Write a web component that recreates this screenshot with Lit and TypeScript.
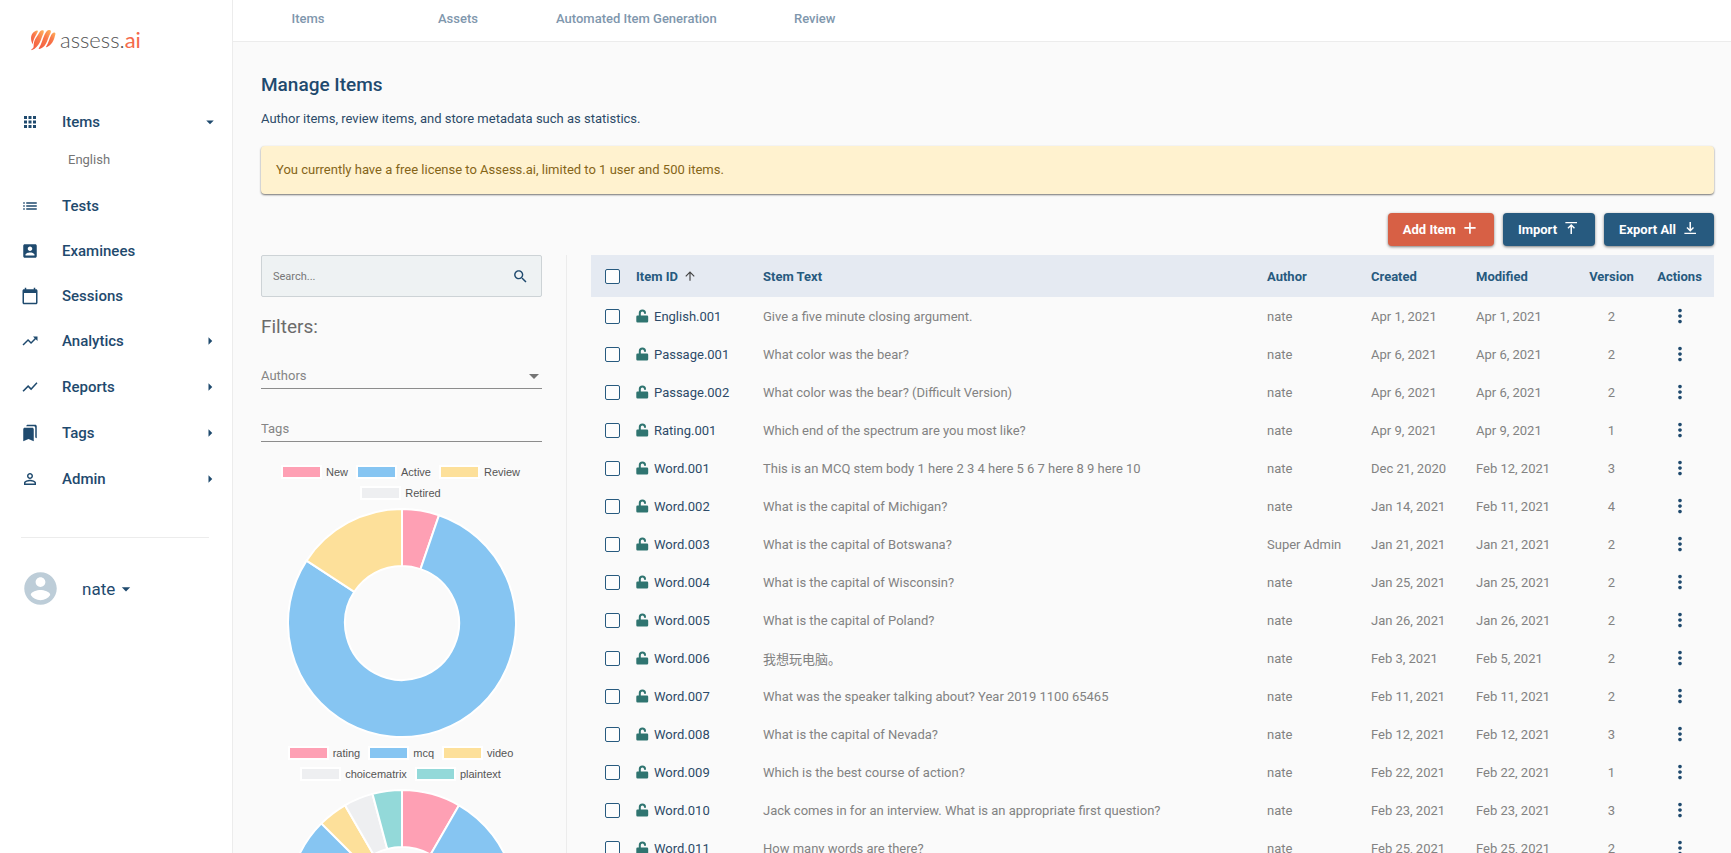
import { LitElement, html, css, svg } from "lit";
import { customElement, property } from "lit/decorators.js";

type Slice = { label: string; value: number; color: string };
type Item = [string, string, string, string, string, string];
type NavEntry = { label: string; icon: string; caret?: "down" | "right"; child?: string };

const ICONS: Record<string, string> = {
  apps: "M4 8h4V4H4v4zm6 12h4v-4h-4v4zm-6 0h4v-4H4v4zm0-6h4v-4H4v4zm6 0h4v-4h-4v4zm6-10v4h4V4h-4zm-6 4h4V4h-4v4zm6 6h4v-4h-4v4zm0 6h4v-4h-4v4z",
  list: "M3 13h2v-2H3v2zm0 4h2v-2H3v2zm0-8h2V7H3v2zm4 4h14v-2H7v2zm0 4h14v-2H7v2zM7 7v2h14V7H7z",
  accountBox: "M3 5v14c0 1.100.890 2 2 2h14c1.100 0 2-.900 2-2V5c0-1.100-.900-2-2-2H5c-1.110 0-2 .900-2 2zm12 4c0 1.660-1.340 3-3 3s-3-1.340-3-3 1.340-3 3-3 3 1.340 3 3zm-9 8c0-2 4-3.100 6-3.100s6 1.100 6 3.100v1H6v-1z",
  calendar: "M20 3h-1V1h-2v2H7V1H5v2H4c-1.100 0-2 .900-2 2v16c0 1.100.900 2 2 2h16c1.100 0 2-.900 2-2V5c0-1.100-.900-2-2-2zm0 18H4V8h16v13z",
  trending: "M16 6l2.290 2.290-4.880 4.880-4-4L2 16.590 3.410 18l6-6 4 4 6.300-6.290L22 12V6z",
  chart: "M3.500 18.490l6-6.010 4 4L22 6.920l-1.410-1.410-7.090 7.970-4-4L2 16.990z",
  bookmarks: "M19 18l2 1V3c0-1.100-.900-2-2-2H8.990C7.890 1 7 1.900 7 3h10c1.100 0 2 .900 2 2v13zM15 5H5c-1.100 0-2 .900-2 2v16l7-3 7 3V7c0-1.100-.900-2-2-2z",
  person: "M12 5.900c1.160 0 2.100.940 2.100 2.100s-.940 2.100-2.100 2.100S9.900 9.160 9.900 8s.940-2.100 2.100-2.100m0 9c2.970 0 6.100 1.460 6.100 2.100v1.100H5.900V17c0-.640 3.130-2.100 6.100-2.100M12 4C9.790 4 8 5.790 8 8s1.790 4 4 4 4-1.790 4-4-1.790-4-4-4zm0 9c-2.670 0-8 1.340-8 4v3h16v-3c0-2.660-5.330-4-8-4z",
  avatar: "M12 2C6.480 2 2 6.480 2 12s4.480 10 10 10 10-4.480 10-10S17.520 2 12 2zm0 3c1.660 0 3 1.340 3 3s-1.340 3-3 3-3-1.340-3-3 1.340-3 3-3zm0 14.200c-2.500 0-4.710-1.280-6-3.220.030-1.990 4-3.080 6-3.080 1.990 0 5.970 1.090 6 3.080-1.290 1.940-3.500 3.220-6 3.220z",
  search: "M15.500 14h-.790l-.280-.270C15.410 12.590 16 11.110 16 9.500 16 5.910 13.090 3 9.500 3S3 5.910 3 9.500 5.910 16 9.500 16c1.610 0 3.090-.590 4.230-1.570l.270.280v.790l5 4.990L20.490 19l-4.990-5zm-6 0C7.010 14 5 11.990 5 9.500S7.010 5 9.500 5 14 7.010 14 9.500 11.990 14 9.500 14z",
  add: "M19.500 13h-6.500v6.500h-2.200V13H4.500v-2.200h6.300V4.500H13v6.300h6.500z",
  upload: "M4.500 4h15.500v1.600H4.500zM11.300 20V10.300L8.600 13 7.300 11.700l5-5 5 5L16 13l-2.700-2.700V20z",
  download: "M4.500 18.400h15.500V20H4.500zM11.300 4v9.400L8.600 10.700 7.300 12l5 5 5-5L16 10.700l-2.700 2.700V4z",
  more: "M12 8c1.100 0 2-.900 2-2s-.900-2-2-2-2 .900-2 2 .900 2 2 2zm0 2c-1.100 0-2 .900-2 2s.900 2 2 2 2-.900 2-2-.900-2-2-2zm0 6c-1.100 0-2 .900-2 2s.900 2 2 2 2-.900 2-2-.900-2-2-2z",
  up: "M4 12l1.410 1.410L11 7.830V20h2V7.830l5.580 5.590L20 12l-8-8-8 8z",
  caretDown: "M7 10l5 5 5-5z",
  caretRight: "M10 17l5-5-5-5z",
};

const icon = (name: string, size: number) =>
  html`<svg viewBox="0 0 24 24" width=${size} height=${size} fill="currentColor" aria-hidden="true"><path d=${ICONS[name]}></path></svg>`;

const ROWS: Item[] = [
  ["English.001", "Give a five minute closing argument.", "nate", "Apr 1, 2021", "Apr 1, 2021", "2"],
  ["Passage.001", "What color was the bear?", "nate", "Apr 6, 2021", "Apr 6, 2021", "2"],
  ["Passage.002", "What color was the bear? (Difficult Version)", "nate", "Apr 6, 2021", "Apr 6, 2021", "2"],
  ["Rating.001", "Which end of the spectrum are you most like?", "nate", "Apr 9, 2021", "Apr 9, 2021", "1"],
  ["Word.001", "This is an MCQ stem body 1 here 2 3 4 here 5 6 7 here 8 9 here 10", "nate", "Dec 21, 2020", "Feb 12, 2021", "3"],
  ["Word.002", "What is the capital of Michigan?", "nate", "Jan 14, 2021", "Feb 11, 2021", "4"],
  ["Word.003", "What is the capital of Botswana?", "Super Admin", "Jan 21, 2021", "Jan 21, 2021", "2"],
  ["Word.004", "What is the capital of Wisconsin?", "nate", "Jan 25, 2021", "Jan 25, 2021", "2"],
  ["Word.005", "What is the capital of Poland?", "nate", "Jan 26, 2021", "Jan 26, 2021", "2"],
  ["Word.006", "我想玩电脑。", "nate", "Feb 3, 2021", "Feb 5, 2021", "2"],
  ["Word.007", "What was the speaker talking about? Year 2019 1100 65465", "nate", "Feb 11, 2021", "Feb 11, 2021", "2"],
  ["Word.008", "What is the capital of Nevada?", "nate", "Feb 12, 2021", "Feb 12, 2021", "3"],
  ["Word.009", "Which is the best course of action?", "nate", "Feb 22, 2021", "Feb 22, 2021", "1"],
  ["Word.010", "Jack comes in for an interview. What is an appropriate first question?", "nate", "Feb 23, 2021", "Feb 23, 2021", "3"],
  ["Word.011", "How many words are there?", "nate", "Feb 25, 2021", "Feb 25, 2021", "2"],
];

const NAV: NavEntry[] = [
  { label: "Items", icon: "apps", caret: "down", child: "English" },
  { label: "Tests", icon: "list" },
  { label: "Examinees", icon: "accountBox" },
  { label: "Sessions", icon: "calendar" },
  { label: "Analytics", icon: "trending", caret: "right" },
  { label: "Reports", icon: "chart", caret: "right" },
  { label: "Tags", icon: "bookmarks", caret: "right" },
  { label: "Admin", icon: "person", caret: "right" },
];

const PINK = "#fea0b4", BLUE = "#86c5f2", YELLOW = "#fde09a", GREY = "#eeeff1", TEAL = "#93d9d9";

const STATUS: Slice[] = [
  { label: "New", value: 1, color: PINK },
  { label: "Active", value: 15, color: BLUE },
  { label: "Review", value: 3, color: YELLOW },
  { label: "Retired", value: 0, color: GREY },
];
const TYPES: Slice[] = [
  { label: "rating", value: 2, color: PINK },
  { label: "mcq", value: 19, color: BLUE },
  { label: "video", value: 1, color: YELLOW },
  { label: "choicematrix", value: 1, color: GREY },
  { label: "plaintext", value: 1, color: TEAL },
];

@customElement("donut-chart")
export class DonutChart extends LitElement {
  @property({ attribute: false }) slices: Slice[] = [];

  static styles = css`
    :host { display: block; margin-bottom: 5px; }
    ul {
      display: flex; flex-wrap: wrap; justify-content: center; gap: 1px 10px;
      margin: 0 0 5px; padding: 0; list-style: none;
      font: 11px/20px "Liberation Sans", Arial, sans-serif; color: #555;
    }
    li { display: flex; align-items: center; gap: 6px; }
    .swatch { width: 37px; height: 10px; outline: 2px solid #fff; }
    svg { display: block; margin: 0 auto; }
  `;

  private arc(from: number, to: number) {
    const R = 114, r = 57, c = 115;
    const at = (radius: number, turn: number) => {
      const a = turn * 2 * Math.PI;
      return `${(c + radius * Math.sin(a)).toFixed(2)} ${(c - radius * Math.cos(a)).toFixed(2)}`;
    };
    const large = to - from > 0.5 ? 1 : 0;
    return `M${at(R, from)}A${R} ${R} 0 ${large} 1 ${at(R, to)}L${at(r, to)}A${r} ${r} 0 ${large} 0 ${at(r, from)}Z`;
  }

  render() {
    const total = this.slices.reduce((sum, s) => sum + s.value, 0);
    let turn = 0;
    const arcs = this.slices.filter((s) => s.value > 0).map((s) => {
      const start = turn;
      turn += s.value / total;
      return svg`<path d=${this.arc(start, turn)} fill=${s.color} stroke="#fff" stroke-width="2"></path>`;
    });
    return html`
      <ul>${this.slices.map((s) => html`<li><span class="swatch" style="background:${s.color}"></span>${s.label}</li>`)}</ul>
      <svg width="230" height="230" viewBox="0 0 230 230" role="img" aria-label="Breakdown of items">${arcs}</svg>
    `;
  }
}

@customElement("side-nav")
export class SideNav extends LitElement {
  static styles = css`
    :host {
      display: block; flex: 0 0 233px; border-right: 1px solid #ececec;
      background: #fff; color: #1f4a6e;
    }
    a, button { color: inherit; text-decoration: none; font-family: inherit; }
    svg { display: block; flex: none; }
    .logo { display: flex; align-items: center; gap: 3px; padding: 28px 0 0 30px; height: 24px; margin-bottom: 47px; }
    .word { font: 300 22px/24px Lato, sans-serif; color: #555; }
    .word b { font-weight: 400; color: #f4694a; }
    .entry {
      display: flex; align-items: center; height: 45px; padding: 0 13px 0 21px;
      font-size: 15px; font-weight: 500;
    }
    .entry.expands { height: 46px; }
    .label { flex: 1; padding-left: 23px; }
    .child { display: block; padding: 0 0 8px 68px; font-size: 13px; line-height: 30px; color: #757575; }
    hr { margin: 35px 23px 0 21px; border: 0; border-top: 1px solid #ececec; }
    .user {
      display: flex; align-items: center; margin: 31px 0 0 21px; padding: 0;
      border: 0; background: none; font-size: 17px; line-height: 20px;
    }
    .user .face { color: #bdcdd8; }
    .user .name { padding: 0 1px 0 22px; }
  `;

  render() {
    return html`
      <a class="logo" href="#" aria-label="assess.ai">
        <svg width="27" height="23" viewBox="0 0 26 22">
          <defs>
            <linearGradient id="ember" x1="0" y1="1" x2="1" y2="0">
              <stop offset="0" stop-color="#f2583f"></stop>
              <stop offset=".6" stop-color="#f97a4a"></stop>
              <stop offset="1" stop-color="#ffb45c"></stop>
            </linearGradient>
          </defs>
          <g fill="url(#ember)">
            <path d="M2.600 14.500C-.500 9 1 3 6.500 1.400 8.500 1 7.500 3 6 5.500 4.500 8 3 11 2.600 14.500z"></path>
            <path d="M3.500 16.500C3.500 11 6 8 8 5 9.500 2.500 10 1.200 12 1.200c1.800 0 1.500 2 .500 4C10.500 9.500 9.500 17 2 20.200 1 20.600 1 20 1.800 19.300 2.800 18.300 3.500 18 3.500 16.500z"></path>
            <path d="M8.500 18.500C11.500 14 12 9.500 14 5.500 15.500 2.500 16.500 1 18.500 1c2 0 2 1.800 1 3.500C17 8.500 16.500 16 10.500 18.800 9 19.500 8 19.300 8.500 18.500z"></path>
            <path d="M15.500 17C18 13.500 18.500 9 20.500 5.500c1-1.700 2.200-2.800 3.500-2 .8.500.5 1.500.2 2.500C23.500 8.500 22.500 14 17 17 16 17.600 15 17.700 15.500 17z"></path>
          </g>
        </svg>
        <span class="word">assess.<b>ai</b></span>
      </a>
      <nav>
        ${NAV.map((n) => html`
          <a class="entry ${n.caret ? "expands" : ""}" href="#">
            ${icon(n.icon, 18)}<span class="label">${n.label}</span>
            ${n.caret ? icon(n.caret === "down" ? "caretDown" : "caretRight", 18) : ""}
          </a>
          ${n.child ? html`<a class="child" href="#">${n.child}</a>` : ""}
        `)}
      </nav>
      <hr />
      <button class="user">
        <span class="face">${icon("avatar", 39)}</span><span class="name">nate</span>${icon("caretDown", 20)}
      </button>
    `;
  }
}

@customElement("app-root")
export class AppRoot extends LitElement {
  static styles = css`
    :host {
      display: flex; height: 100vh; overflow: hidden; background: #fafafa;
      font-family: Roboto, "Noto Sans CJK SC", sans-serif; font-size: 13px; color: #1f4a6e;
    }
    *, *::before { box-sizing: border-box; }
    svg { display: block; flex: none; }
    .page { flex: 1; min-width: 0; }
    .tabs { display: flex; height: 42px; background: #fff; border-bottom: 1px solid #ececec; }
    .tabs a {
      min-width: 150px; padding: 9px 23px 0; text-align: center; line-height: 20px;
      font-weight: 500; color: #7f97ad; text-decoration: none;
    }
    main { padding: 30px 17px 0 28px; }
    h1 { margin: 0; font-size: 19px; line-height: 26px; font-weight: 500; }
    .intro { margin: 11px 0 17px; line-height: 20px; color: #2c4a68; }
    .notice {
      height: 48px; padding: 0 15px; border-radius: 4px; line-height: 48px;
      background: #fff2cf; color: #856518; box-shadow: 0 1px 2px rgba(0, 0, 0, .55);
    }
    .actions { display: flex; justify-content: flex-end; gap: 9px; margin: 19px 0 9px; }
    .actions button {
      display: flex; align-items: center; gap: 5px; height: 33px; padding: 0 15px;
      border: 0; border-radius: 4px; background: #275a7f; color: #fff;
      font: bold 13px Roboto, sans-serif; box-shadow: 0 1px 3px rgba(0, 0, 0, .5);
    }
    .actions svg { margin-bottom: 3px; }
    .actions .primary { background: #d76045; }
    .columns { display: flex; align-items: stretch; }
    .filters { flex: 0 0 306px; padding-right: 24px; border-right: 1px solid #ececec; }
    .search {
      display: flex; align-items: center; height: 42px; padding: 0 12px 0 11px;
      border: 1px solid #cdd3d6; border-radius: 2px; background: #eef2f3;
    }
    .search input {
      flex: 1; min-width: 0; padding: 0; border: 0; outline: 0; background: none;
      font: 11px Roboto, sans-serif; color: #555;
    }
    .search input::placeholder { color: #777; opacity: 1; }
    .search button { padding: 0; border: 0; background: none; color: #1f4a6e; }
    h2 { margin: 16px 0 23px; font-size: 19px; line-height: 28px; font-weight: 400; color: #6b6b6b; }
    .field { display: flex; align-items: center; height: 25px; margin-bottom: 28px; border-bottom: 1px solid #8c8c8c; }
    .field select, .field input {
      flex: 1; min-width: 0; height: 24px; padding: 0 0 2px; border: 0; outline: 0; appearance: none;
      background: none; font: 13px Roboto, sans-serif; color: #858585;
    }
    .field input::placeholder { color: #858585; opacity: 1; }
    .field svg { margin-right: -4px; color: #757575; }
    .charts { margin-top: -8px; }
    .results { flex: 1; min-width: 0; padding-left: 24px; }
    table { width: 100%; table-layout: fixed; border-collapse: collapse; color: #828282; }
    th { height: 42px; padding: 0; text-align: left; background: #e5eaf2; color: #275a7f; font-weight: bold; }
    td { height: 38px; padding: 0; white-space: nowrap; }
    .pick { width: 45px; padding-left: 14px; }
    .id { width: 127px; }
    .author { width: 104px; }
    .created { width: 105px; }
    .modified { width: 102px; }
    .version { width: 67px; text-align: center; }
    .menu { width: 69px; text-align: center; }
    .box {
      display: block; width: 15px; height: 15px; margin: 0; appearance: none;
      border: 1px solid #275a7f; border-radius: 2px; background: #fdfdfd;
    }
    .line { display: flex; align-items: center; gap: 5px; }
    .line a { color: #2c4a68; text-decoration: none; }
    .lock { color: #2f7470; }
    .sort { color: #444; }
    .menu button { display: inline-block; padding: 0; border: 0; background: none; color: #1f4a6e; vertical-align: middle; }
  `;

  render() {
    return html`
      <side-nav></side-nav>
      <div class="page">
        <nav class="tabs">
          <a href="#">Items</a><a href="#">Assets</a><a href="#">Automated Item Generation</a><a href="#">Review</a>
        </nav>
        <main>
          <h1>Manage Items</h1>
          <p class="intro">Author items, review items, and store metadata such as statistics.</p>
          <div class="notice" role="status">You currently have a free license to Assess.ai, limited to 1 user and 500 items.</div>
          <div class="actions">
            <button class="primary">Add Item ${icon("add", 18)}</button>
            <button>Import ${icon("upload", 18)}</button>
            <button>Export All ${icon("download", 18)}</button>
          </div>
          <div class="columns">
            <aside class="filters">
              <form class="search">
                <input type="text" placeholder="Search..." aria-label="Search" />
                <button type="button" aria-label="Search">${icon("search", 17)}</button>
              </form>
              <h2>Filters:</h2>
              <div class="field">
                <select aria-label="Authors"><option>Authors</option></select>${icon("caretDown", 24)}
              </div>
              <div class="field"><input type="text" placeholder="Tags" aria-label="Tags" /></div>
              <div class="charts">
                <donut-chart .slices=${STATUS}></donut-chart>
                <donut-chart .slices=${TYPES}></donut-chart>
              </div>
            </aside>
            <section class="results">
              <table>
                <thead>
                  <tr>
                    <th class="pick"><input class="box" type="checkbox" aria-label="Select all items" /></th>
                    <th class="id"><span class="line">Item ID <span class="sort">${icon("up", 14)}</span></span></th>
                    <th>Stem Text</th>
                    <th class="author">Author</th>
                    <th class="created">Created</th>
                    <th class="modified">Modified</th>
                    <th class="version">Version</th>
                    <th class="menu">Actions</th>
                  </tr>
                </thead>
                <tbody>
                  ${ROWS.map(([id, stem, author, created, modified, version]) => html`
                    <tr>
                      <td class="pick"><input class="box" type="checkbox" aria-label="Select ${id}" /></td>
                      <td><span class="line">
                        <svg class="lock" width="13" height="14" viewBox="0 0 13 14" fill="currentColor" aria-hidden="true">
                          <path d="M1.500 6.500h9.500A1.200 1.200 0 0 1 12.200 7.700v4.600a1.200 1.200 0 0 1-1.200 1.200H1.500A1.200 1.200 0 0 1 .300 12.300V7.700a1.200 1.200 0 0 1 1.200-1.200z"></path>
                          <path d="M3.800 7V4a2.600 2.600 0 0 1 5.200 0v.700" fill="none" stroke="currentColor" stroke-width="2"></path>
                        </svg>
                        <a href="#">${id}</a></span></td>
                      <td>${stem}</td>
                      <td>${author}</td>
                      <td>${created}</td>
                      <td>${modified}</td>
                      <td class="version">${version}</td>
                      <td class="menu"><button aria-label="Actions for ${id}">${icon("more", 22)}</button></td>
                    </tr>`)}
                </tbody>
              </table>
            </section>
          </div>
        </main>
      </div>
    `;
  }
}
